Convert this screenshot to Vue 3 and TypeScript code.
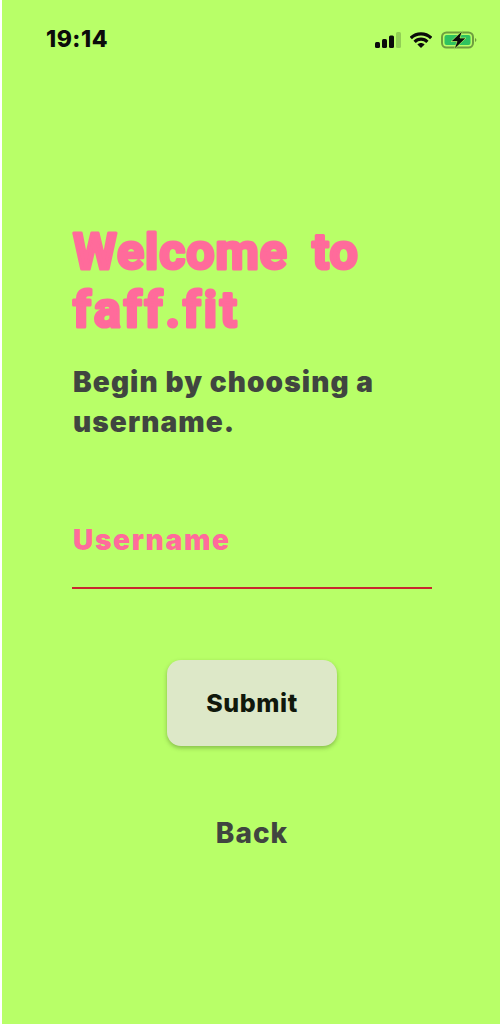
<script setup lang="ts">
const title: string[] = ['Welcome to', 'faff.fit']
</script>

<template>
  <div class="page">
    <header class="status">
      <span class="time">19:14</span>
      <div class="icons">
        <svg class="signal" width="26" height="16" viewBox="0 0 26 16">
          <rect x="0" y="10" width="5" height="6" rx="1.5" fill="#0b0b0b" />
          <rect x="7" y="7" width="5" height="9" rx="1.5" fill="#0b0b0b" />
          <rect x="14" y="3.5" width="5" height="12.5" rx="1.5" fill="#0b0b0b" />
          <rect x="21" y="0" width="5" height="16" rx="1.5" fill="#92cf55" />
        </svg>
        <svg class="wifi" width="22" height="16" viewBox="0 0 22 16">
          <path d="M0.8 6 C6.4 .4 15.6 .4 21.2 6" fill="none" stroke="#0b0b0b" stroke-width="3.2" />
          <path d="M4.6 9.8 C8.2 6.2 13.8 6.2 17.4 9.8" fill="none" stroke="#0b0b0b" stroke-width="3.2" />
          <path d="M7.4 12.6 C9.4 10.6 12.6 10.6 14.6 12.6 L11 16 Z" fill="#0b0b0b" />
        </svg>
        <svg class="battery" width="36" height="20" viewBox="0 0 36 20">
          <rect x="1" y="2.5" width="31" height="15" rx="4.5" fill="none" stroke="#6f9e3f" stroke-width="2" />
          <rect x="3.5" y="5" width="26" height="10" rx="2" fill="#2fc25f" />
          <path d="M34 8 C35 8.5 35.4 9.2 35.4 10 C35.4 10.8 35 11.5 34 12 Z" fill="#6f9e3f" />
          <path d="M21.5 0.5 L10 11.5 H16 L13 19.5 L25 8 H19 Z" fill="#0b0b0b" stroke="#b8ff68" stroke-width=".7" />
        </svg>
      </div>
    </header>

    <main class="content">
      <svg class="title" width="360" height="116" viewBox="0 0 360 116">
        <text v-for="(line, i) in title" :key="line" class="title-text" :class="{ wide: i === 1 }" x="1" :y="45 + i * 58" xml:space="preserve">{{ line }}</text>
      </svg>
      <p class="intro">Begin by choosing a username.</p>
      <label class="field">
        <span class="label">Username</span>
        <span class="line"></span>
      </label>
      <button class="submit" type="button">Submit</button>
      <a class="back">Back</a>
    </main>
  </div>
</template>

<style>
html, body { margin: 0; background: #fff; }
</style>

<style scoped>
.page {
  box-sizing: border-box;
  width: 498px;
  height: 1024px;
  margin-left: 2px;
  background: #b8ff68;
  font-family: Inter, "Liberation Sans", sans-serif;
  overflow: hidden;
}
.status {
  display: flex;
  justify-content: space-between;
  align-items: center;
  height: 24px;
  padding: 27px 23px 0 44px;
}
.time {
  font-size: 23px;
  font-weight: 800;
  letter-spacing: 0.5px;
  color: #0b0b0b;
}
.icons { display: flex; align-items: center; gap: 9px; margin-top: 2px; }
.content {
  display: flex;
  flex-direction: column;
  width: 360px;
  padding: 173px 0 0 70px;
}
.title { display: block; overflow: visible; }
.title-text {
  font-family: Roboto, sans-serif;
  font-size: 50px;
  font-weight: 700;
  letter-spacing: 1px;
  fill: #ff6b9b;
  stroke: #ff6b9b;
  stroke-width: 3.2px;
  stroke-linejoin: round;
  word-spacing: 11px;
}
.title-text.wide { letter-spacing: 3px; }
.intro {
  width: 340px;
  margin: 22px 0 0 1px;
  font-size: 28px;
  line-height: 40px;
  font-weight: 900;
  letter-spacing: 1.1px;
  color: #404540;
}
.field { display: flex; flex-direction: column; margin-top: 78px; }
.label {
  margin-left: 1px;
  font-size: 28px;
  line-height: 40px;
  font-weight: 900;
  letter-spacing: 1.7px;
  color: #ff6b9b;
}
.line { height: 2px; margin-top: 27px; background: #c8282e; }
.submit {
  align-self: center;
  width: 170px;
  height: 86px;
  margin-top: 71px;
  border: 0;
  border-radius: 14px;
  background: #dde8c8;
  box-shadow: 0 2px 4px rgba(60, 90, 30, .4);
  font-family: inherit;
  font-size: 25px;
  font-weight: 800;
  letter-spacing: 0.6px;
  color: #10180c;
}
.back {
  align-self: center;
  margin-top: 67px;
  font-size: 28px;
  line-height: 40px;
  font-weight: 800;
  letter-spacing: 1px;
  color: #404540;
}
</style>
